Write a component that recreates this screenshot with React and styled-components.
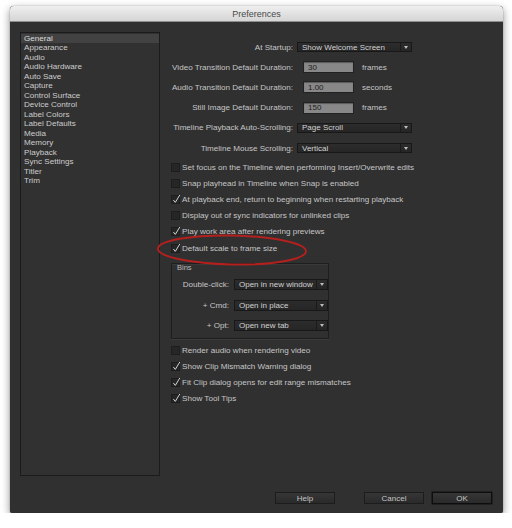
import React from "react";
import styled, { createGlobalStyle } from "styled-components";

const GlobalStyle = createGlobalStyle`
  html, body {
    margin: 0;
    padding: 0;
    background: #ffffff;
  }
  body {
    font-family: "Liberation Sans", Arial, sans-serif;
  }
`;

const Window = styled.div`
  position: relative;
  margin: 6px 0 0 10px;
  width: 493px;
  height: 507px;
  display: flex;
  flex-direction: column;
  background: #303030;
  border-radius: 4px 4px 2px 2px;
  box-shadow: 0 3px 9px rgba(0, 0, 0, 0.45), 0 0 1px rgba(0, 0, 0, 0.5);
  overflow: hidden;
`;

const TitleBar = styled.div`
  height: 16px;
  flex: none;
  display: flex;
  align-items: center;
  justify-content: center;
  background: linear-gradient(#efefef, #d5d5d5);
  border-bottom: 1px solid #8e8e8e;
  box-sizing: border-box;
  color: #4a4a4a;
  font-size: 9px;
`;

const Content = styled.div`
  flex: 1;
  display: flex;
  padding: 10px 0 0 10px;
`;

const Sidebar = styled.ul`
  list-style: none;
  margin: 0;
  padding: 1px 0 0;
  width: 140px;
  height: 444px;
  box-sizing: border-box;
  border: 1px solid #1b1b1b;
  background: #313131;
`;

const SideItem = styled.li`
  height: 9.47px;
  line-height: 9.47px;
  padding-left: 3px;
  font-size: 8.1px;
  color: ${(p) => (p.$active ? "#dcdcdc" : "#cccccc")};
  background: ${(p) => (p.$active ? "#424242" : "transparent")};
  white-space: nowrap;
`;

const Main = styled.div`
  flex: 1;
  padding-top: 5px;
  font-size: 8.1px;
  color: #c6c6c6;
`;

const FormRow = styled.div`
  display: flex;
  align-items: center;
  height: 20.2px;
`;

const FieldLabel = styled.span`
  width: ${(p) => p.$w || 133}px;
  flex: none;
  text-align: right;
  padding-right: ${(p) => p.$gap || 4}px;
  white-space: nowrap;
`;

const Select = styled.div`
  width: ${(p) => p.$w}px;
  height: ${(p) => p.$h || 10}px;
  box-sizing: border-box;
  display: flex;
  align-items: stretch;
  background: linear-gradient(#2c2c2c, #262626);
  border: 1px solid #181818;
  color: #d2d2d2;
  font-size: 8px;
`;

const SelectText = styled.span`
  flex: 1;
  display: flex;
  align-items: center;
  padding-left: 4px;
  white-space: nowrap;
`;

const SelectArrow = styled.span`
  width: 10px;
  display: flex;
  align-items: center;
  justify-content: center;
  border-left: 1px solid #1a1a1a;
  &::after {
    content: "";
    border-left: 2.5px solid transparent;
    border-right: 2.5px solid transparent;
    border-top: 3px solid #bdbdbd;
  }
`;

const NumberInput = styled.div`
  margin-left: 6px;
  width: 51px;
  height: 12px;
  box-sizing: border-box;
  display: flex;
  align-items: center;
  padding-left: 4px;
  background: #888888;
  border: 1px solid #222222;
  box-shadow: inset 0 1px 1px rgba(0, 0, 0, 0.35);
  color: #1c1c1c;
  font-size: 8px;
`;

const Unit = styled.span`
  margin-left: 8px;
`;

const CheckList = styled.div`
  padding-left: 11px;
  margin-top: ${(p) => p.$top || 0}px;
`;

const CheckRow = styled.div`
  display: flex;
  align-items: center;
  height: 16.2px;
  gap: 2px;
  white-space: nowrap;
`;

const Box = styled.span`
  width: 9px;
  height: 9px;
  flex: none;
  box-sizing: border-box;
  background: #262626;
  border: 1px solid #1d1d1d;
  position: relative;
  svg {
    position: absolute;
    left: 0;
    top: -2px;
    overflow: visible;
  }
`;

const Group = styled.div`
  margin: 7px 0 0 11px;
  width: 158px;
  height: 76px;
  box-sizing: border-box;
  border: 1px solid #1e1e1e;
  box-shadow: 0 1px 0 #3c3c3c, inset 0 1px 0 #3a3a3a;
`;

const GroupTitle = styled.div`
  height: 10px;
  line-height: 8px;
  padding-left: 5px;
  font-size: 7.5px;
  color: #bdbdbd;
`;

const GroupRow = styled.div`
  display: flex;
  align-items: center;
  height: 20.5px;
`;

const Footer = styled.div`
  flex: none;
  display: flex;
  justify-content: flex-end;
  padding: 16px 11px 9px;
`;

const Button = styled.div`
  width: 60px;
  height: 12px;
  box-sizing: border-box;
  display: flex;
  align-items: center;
  justify-content: center;
  margin-left: ${(p) => p.$ml || 0}px;
  background: linear-gradient(#363636, #2a2a2a);
  border: 1px solid ${(p) => (p.$default ? "#0e0e0e" : "#1c1c1c")};
  box-shadow: ${(p) => (p.$default ? "0 0 0 0.5px #111" : "none")};
  color: #c4c4c4;
  font-size: 8px;
`;

const Highlight = styled.svg`
  position: absolute;
  left: 140px;
  top: 223px;
  pointer-events: none;
`;

const sections = [
  "General",
  "Appearance",
  "Audio",
  "Audio Hardware",
  "Auto Save",
  "Capture",
  "Control Surface",
  "Device Control",
  "Label Colors",
  "Label Defaults",
  "Media",
  "Memory",
  "Playback",
  "Sync Settings",
  "Titler",
  "Trim",
];

const firstChecks = [
  ["Set focus on the Timeline when performing Insert/Overwrite edits", false],
  ["Snap playhead in Timeline when Snap is enabled", false],
  ["At playback end, return to beginning when restarting playback", true],
  ["Display out of sync indicators for unlinked clips", false],
  ["Play work area after rendering previews", true],
  ["Default scale to frame size", true],
];

const lastChecks = [
  ["Render audio when rendering video", false],
  ["Show Clip Mismatch Warning dialog", true],
  ["Fit Clip dialog opens for edit range mismatches", true],
  ["Show Tool Tips", true],
];

function Checkbox({ checked }) {
  return (
    <Box>
      {checked && (
        <svg width="9" height="10" viewBox="0 0 9 10">
          <path d="M1.4 6 L3.3 8.4 L7.8 1" fill="none" stroke="#d0d0d0" strokeWidth="1" />
        </svg>
      )}
    </Box>
  );
}

function Dropdown({ value, w, h }) {
  return (
    <Select $w={w} $h={h}>
      <SelectText>{value}</SelectText>
      <SelectArrow />
    </Select>
  );
}

export default function App() {
  return (
    <>
      <GlobalStyle />
      <Window>
        <TitleBar>Preferences</TitleBar>
        <Content>
          <Sidebar>
            {sections.map((s, i) => (
              <SideItem key={s} $active={i === 0}>
                {s}
              </SideItem>
            ))}
          </Sidebar>
          <Main>
            <FormRow>
              <FieldLabel>At Startup:</FieldLabel>
              <Dropdown value="Show Welcome Screen" w={115} />
            </FormRow>
            <FormRow>
              <FieldLabel>Video Transition Default Duration:</FieldLabel>
              <NumberInput>30</NumberInput>
              <Unit>frames</Unit>
            </FormRow>
            <FormRow>
              <FieldLabel>Audio Transition Default Duration:</FieldLabel>
              <NumberInput>1.00</NumberInput>
              <Unit>seconds</Unit>
            </FormRow>
            <FormRow>
              <FieldLabel>Still Image Default Duration:</FieldLabel>
              <NumberInput>150</NumberInput>
              <Unit>frames</Unit>
            </FormRow>
            <FormRow>
              <FieldLabel>Timeline Playback Auto-Scrolling:</FieldLabel>
              <Dropdown value="Page Scroll" w={115} />
            </FormRow>
            <FormRow>
              <FieldLabel>Timeline Mouse Scrolling:</FieldLabel>
              <Dropdown value="Vertical" w={115} />
            </FormRow>

            <CheckList $top={1}>
              {firstChecks.map(([t, c]) => (
                <CheckRow key={t}>
                  <Checkbox checked={c} />
                  {t}
                </CheckRow>
              ))}
            </CheckList>

            <Group>
              <GroupTitle>Bins</GroupTitle>
              <GroupRow>
                <FieldLabel $w={57} $gap={5}>Double-click:</FieldLabel>
                <Dropdown value="Open in new window" w={94} h={11} />
              </GroupRow>
              <GroupRow>
                <FieldLabel $w={57} $gap={5}>+ Cmd:</FieldLabel>
                <Dropdown value="Open in place" w={94} h={11} />
              </GroupRow>
              <GroupRow>
                <FieldLabel $w={57} $gap={5}>+ Opt:</FieldLabel>
                <Dropdown value="Open new tab" w={94} h={11} />
              </GroupRow>
            </Group>

            <CheckList $top={3}>
              {lastChecks.map(([t, c]) => (
                <CheckRow key={t}>
                  <Checkbox checked={c} />
                  {t}
                </CheckRow>
              ))}
            </CheckList>
          </Main>
        </Content>
        <Footer>
          <Button>Help</Button>
          <Button $ml={29}>Cancel</Button>
          <Button $ml={8} $default>
            OK
          </Button>
        </Footer>
        <Highlight width="160" height="40" viewBox="0 0 160 40">
          <ellipse
            cx="82"
            cy="21"
            rx="74"
            ry="14.5"
            fill="none"
            stroke="#b3201e"
            strokeWidth="2"
            transform="rotate(1 82 21)"
          />
        </Highlight>
      </Window>
    </>
  );
}
